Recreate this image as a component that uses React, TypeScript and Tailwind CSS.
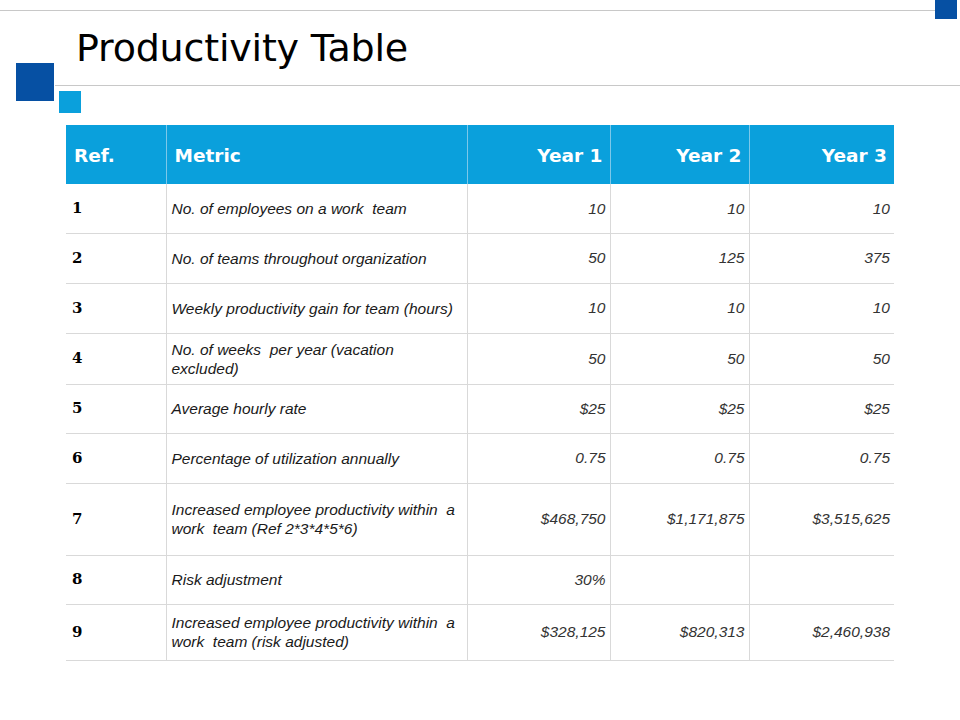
const rows = [
  { ref: "1", metric: "No. of employees on a work  team", y1: "10", y2: "10", y3: "10", h: "h-[49px]" },
  { ref: "2", metric: "No. of teams throughout organization", y1: "50", y2: "125", y3: "375", h: "h-[50px]" },
  { ref: "3", metric: "Weekly productivity gain for team (hours)", y1: "10", y2: "10", y3: "10", h: "h-[50px]" },
  { ref: "4", metric: "No. of weeks  per year (vacation excluded)", y1: "50", y2: "50", y3: "50", h: "h-[51px]" },
  { ref: "5", metric: "Average hourly rate", y1: "$25", y2: "$25", y3: "$25", h: "h-[49px]" },
  { ref: "6", metric: "Percentage of utilization annually", y1: "0.75", y2: "0.75", y3: "0.75", h: "h-[50px]" },
  { ref: "7", metric: "Increased employee productivity within  a work  team (Ref 2*3*4*5*6)", y1: "$468,750", y2: "$1,171,875", y3: "$3,515,625", h: "h-[72px]" },
  { ref: "8", metric: "Risk adjustment", y1: "30%", y2: "", y3: "", h: "h-[49px]" },
  { ref: "9", metric: "Increased employee productivity within  a work  team (risk adjusted)", y1: "$328,125", y2: "$820,313", y3: "$2,460,938", h: "h-[56px]" },
]

const sans = { fontFamily: "'Liberation Sans', Arial, sans-serif" }

export default function App() {
  return (
    <div className="relative w-[960px] h-[720px] bg-white overflow-hidden">
      {/* decorative squares */}
      <div className="absolute left-[935px] top-0 w-[22px] h-[19px] bg-[#0650a3]"></div>
      <div className="absolute left-[16px] top-[63px] w-[38px] h-[38px] bg-[#0650a3]"></div>
      <div className="absolute left-[59px] top-[91px] w-[22px] h-[22px] bg-[#0aa0dc]"></div>

      <div className="pt-[10px]">
        <div className="w-[935px] border-t border-[#c8c8c8]"></div>
        <h1
          className="pl-[76px] pt-[16px] h-[74px] text-[38px] leading-[42px] text-black tracking-[-0.2px]"
          style={{ fontFamily: "Verdana, 'DejaVu Sans', sans-serif" }}
        >
          Productivity Table
        </h1>
        <div className="ml-[55px] border-t border-[#c8c8c8]"></div>
      </div>

      <div className="pl-[66px] pt-[39px]">
        <table className="border-collapse table-fixed w-[828px]">
          <colgroup>
            <col className="w-[100px]" />
            <col className="w-[301px]" />
            <col className="w-[143px]" />
            <col className="w-[139px]" />
            <col className="w-[145px]" />
          </colgroup>
          <thead>
            <tr
              className="h-[59px] bg-[#0aa0dc] text-white text-[18.5px] font-bold"
              style={{ fontFamily: "Verdana, 'DejaVu Sans', sans-serif" }}
            >
              <th className="text-left pl-[8px] pt-[2px]">Ref.</th>
              <th className="text-left pl-[8px] pt-[2px] border-l border-[#7cc8ea]">Metric</th>
              <th className="text-right pr-[7px] pt-[2px] border-l border-[#7cc8ea]">Year 1</th>
              <th className="text-right pr-[7px] pt-[2px] border-l border-[#7cc8ea]">Year 2</th>
              <th className="text-right pr-[7px] pt-[2px] border-l border-[#7cc8ea]">Year 3</th>
            </tr>
          </thead>
          <tbody>
            {rows.map((r) => (
              <tr key={r.ref} className={`${r.h} border-b border-[#d9d9d9]`}>
                <td
                  className="pl-[6px] text-[15px] font-bold text-black"
                  style={{ fontFamily: "Georgia, 'DejaVu Serif', serif" }}
                >
                  {r.ref}
                </td>
                <td
                  className="pl-[5px] pr-[6px] border-l border-[#d9d9d9] text-[15.5px] leading-[19px] italic text-[#1a1a1a] whitespace-pre-wrap"
                  style={sans}
                >
                  {r.metric}
                </td>
                <td className="pr-[4px] text-right border-l border-[#d9d9d9] text-[15.5px] italic text-[#333]" style={sans}>
                  {r.y1}
                </td>
                <td className="pr-[4px] text-right border-l border-[#d9d9d9] text-[15.5px] italic text-[#333]" style={sans}>
                  {r.y2}
                </td>
                <td className="pr-[4px] text-right border-l border-[#d9d9d9] text-[15.5px] italic text-[#333]" style={sans}>
                  {r.y3}
                </td>
              </tr>
            ))}
          </tbody>
        </table>
      </div>
    </div>
  )
}
